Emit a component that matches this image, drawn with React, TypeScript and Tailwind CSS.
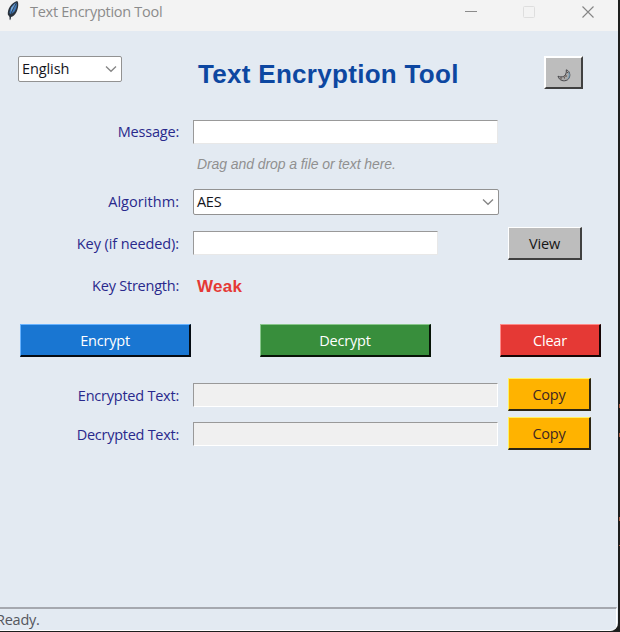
import type { ReactNode } from "react";

const ui = "font-['Open_Sans','Noto_Sans',sans-serif]";

function Label({ children, tracking }: { children: string; tracking: string }) {
  return (
    <div className={`w-[193px] shrink-0 pr-[14px] text-right text-[14.5px] leading-5 whitespace-nowrap text-[#29298c] ${tracking}`}>
      {children}
    </div>
  );
}

function Entry({ className }: { className: string }) {
  return (
    <input
      aria-label="entry"
      className={`h-6 shrink-0 rounded-none border border-t-[#999999] border-l-[#999999] outline-none ${className}`}
    />
  );
}

function Push({ className, children }: { className: string; children: ReactNode }) {
  return (
    <button
      className={`flex h-[33px] shrink-0 items-center justify-center border-t border-l border-r-2 border-b-2 pt-[2px] text-[14.5px] leading-5 tracking-[-0.2px] ${className}`}
    >
      {children}
    </button>
  );
}

function Combo({ value, className }: { value: string; className: string }) {
  return (
    <div className={`flex h-[26px] shrink-0 items-center justify-between rounded-[2px] border border-[#929292] bg-white pr-[4px] pl-[3px] text-[14.5px] text-[#15151c] ${className}`}>
      <span className="leading-5">{value}</span>
      <svg width="12" height="8" viewBox="0 0 12 8" fill="none" stroke="#858585" strokeWidth="1.3">
        <path d="M1 1.500 6 6.300 11 1.500" />
      </svg>
    </div>
  );
}

function Feather() {
  return (
    <svg width="14" height="21" viewBox="0 0 14 21">
      <path d="M4 20.500 3.500 17 1.800 14.500C1.500 9 5 3 11 1c2 1 1.500 7-.5 11-1.500 3-3.500 4.500-5.500 5Z" fill="#2b333d" />
      <path d="M3.500 13C4 8 7 4 10.500 2.500c1 3-.5 7.500-2.500 9.500l-3 2.500Z" fill="#4079b8" />
      <path d="M5 8 9.500 3.500 8.500 7 5 12Z" fill="#78a9dc" />
      <path d="M4 19.500C4.500 14 7 8 10.500 3" fill="none" stroke="#26313d" strokeWidth=".8" />
    </svg>
  );
}

function Moon() {
  return (
    <svg className="mt-[3px]" width="14" height="13" viewBox="0 0 14 13" fill="none" stroke="#46464a" strokeWidth="1">
      <path d="M9.300.8C13.500 2 14 8.500 10.500 10.800 7 13 2 11.500 1 7.200 4.500 8.800 10 8 9.300.8Z" fill="#a9a9a9" />
      <path d="M4 8.200v2.300M7 7.500l.5 2M8 7h2M9.800 3l1.500 1" stroke="#5b4b43" />
      <path d="M11.800 3.500c1 2 .5 4.500-.8 6" stroke="#6e9dbb" />
    </svg>
  );
}

export default function App() {
  return (
    <div className={`flex h-[632px] w-[620px] overflow-hidden bg-[#1d1e1d] ${ui}`}>
      <div className="flex h-[631px] w-[618px] flex-col overflow-hidden rounded-br-[8px] border-b border-white bg-[#e3eaf2]">
        <header className="flex h-[31px] shrink-0 items-start bg-[#f3f3f3]">
          <div className="ml-[6px] w-6"><Feather /></div>
          <span className="mt-[2px] text-[14.5px] leading-5 tracking-[-0.28px] text-[#8b8b8b]">Text Encryption Tool</span>
          <svg className="ml-auto" width="138" height="24" viewBox="0 0 138 24" fill="none">
            <path d="M0 11.500H12" stroke="#8b8b8b" />
            <rect x="58.500" y="6.500" width="11" height="11" rx="1" stroke="#dedede" />
            <path d="m117.500 6.500 11 11m0-11-11 11" stroke="#858585" strokeWidth="1.100" />
          </svg>
          <div className="w-[15px]" />
        </header>
        <main className="grow">
          <div className="flex h-[88px] items-start pt-[25px] pl-[18px]">
            <Combo value="English" className="w-[104px] tracking-[-0.1px]" />
            <h1 className="ml-[76px] w-[346px] pt-[2px] font-['Liberation_Sans',Arial,sans-serif] text-[26px] leading-8 font-bold tracking-[0.3px] whitespace-nowrap text-[#0d47a1]">Text Encryption Tool</h1>
            <Push className="w-[39px] border-t-2 border-l-2 border-t-white border-l-white border-r-[#404040] border-b-[#404040] bg-[#bdbdbd]"><Moon /></Push>
          </div>
          <div className="flex h-[26px] items-center">
            <Label tracking="tracking-[-0.2px]">Message:</Label>
            <Entry className="w-[305px] border-r-[#e8e8e8] border-b-[#e8e8e8] bg-white" />
          </div>
          <p className="h-[44px] pt-[9px] pl-[197px] font-['Liberation_Sans',Arial,sans-serif] text-[14px] leading-5 tracking-[-0.08px] text-[#909090] italic">Drag and drop a file or text here.</p>
          <div className="flex h-[26px] items-center">
            <Label tracking="tracking-[0.05px]">Algorithm:</Label>
            <Combo value="AES" className="w-[306px] tracking-[-0.3px]" />
          </div>
          <div className="mt-3 flex h-[33px] items-center">
            <Label tracking="tracking-[-0.1px]">Key (if needed):</Label>
            <Entry className="-mt-[2px] w-[245px] border-r-[#e8e8e8] border-b-[#e8e8e8] bg-white" />
            <Push className="ml-[70px] w-[74px] border-t-white border-l-white border-r-[#404040] border-b-[#404040] bg-[#bdbdbd] text-[#151515]">View</Push>
          </div>
          <div className="mt-4 flex h-5 items-center">
            <Label tracking="tracking-[-0.23px]">Key Strength:</Label>
            <span className="ml-1 pt-[2px] font-['Liberation_Sans',Arial,sans-serif] text-[17px] leading-5 font-bold tracking-[0.3px] text-[#e53935]">Weak</span>
          </div>
          <div className="mt-7 flex justify-between pr-[17px] pl-5 text-white">
            <Push className="w-[171px] border-t-[#68b3ff] border-l-[#68b3ff] border-r-[#050b12] border-b-[#050b12] bg-[#1976d2]">Encrypt</Push>
            <Push className="w-[171px] border-t-[#88c68b] border-l-[#88c68b] border-r-[#071307] border-b-[#071307] bg-[#388e3c]">Decrypt</Push>
            <Push className="w-[101px] border-t-[#ff8a88] border-l-[#ff8a88] border-r-[#160505] border-b-[#160505] bg-[#e53935]">Clear</Push>
          </div>
          <div className="mt-[21px] flex flex-col gap-[6px]">
            <div className="flex items-center">
              <Label tracking="pt-[3px] tracking-[-0.23px]">Encrypted Text:</Label>
              <Entry className="w-[305px] border-r-white border-b-white bg-[#f0f0f0]" />
              <Push className="ml-[10px] w-[83px] border-t-[#fff263] border-l-[#fff263] border-r-[#2b2515] border-b-[#2b2515] bg-[#ffb300] text-[#3e2723]">Copy</Push>
            </div>
            <div className="flex items-center">
              <Label tracking="pt-[3px] tracking-[-0.27px]">Decrypted Text:</Label>
              <Entry className="w-[305px] border-r-white border-b-white bg-[#f0f0f0]" />
              <Push className="ml-[10px] w-[83px] border-t-[#fff263] border-l-[#fff263] border-r-[#2b2515] border-b-[#2b2515] bg-[#ffb300] text-[#3e2723]">Copy</Push>
            </div>
          </div>
        </main>
        <footer className="mr-px h-[23px] shrink-0 border-t-2 border-r border-t-[#a5a8af] border-r-white text-[14.5px] leading-[21px] tracking-[-0.25px] text-[#55565d]">
          <span className="-ml-[4px]">Ready.</span>
        </footer>
      </div>
      <div className="flex w-[2px] flex-col items-end pt-[404px]">
        <div className="h-1 w-px bg-[#a95e43]" />
        <div className="mt-[25px] h-1 w-px bg-[#a95e43]" />
        <div className="mt-[80px] h-1 w-px bg-[#a95e43]" />
        <div className="mt-6 h-px w-px bg-[#a95e43]" />
      </div>
    </div>
  );
}
